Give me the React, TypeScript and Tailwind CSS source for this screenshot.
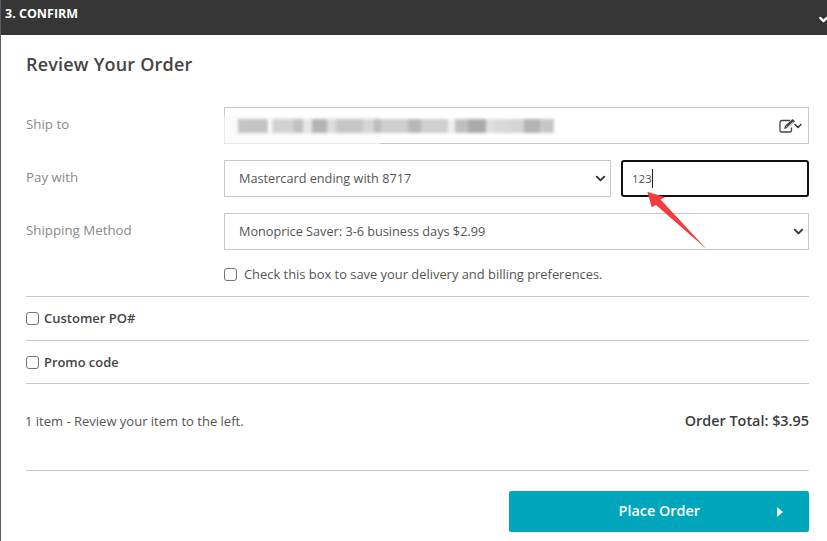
import { ChevronDown } from "lucide-react";

const blurBlocks = [
  "w-[30px] bg-[#c4c4c4]", "w-[4px] bg-white", "w-[22px] bg-[#d2d2d2]", "w-[9px] bg-[#c0c0c0]", "w-[9px] bg-[#e6e6e6]",
  "w-[15px] bg-[#b4b4b4]", "w-[9px] bg-[#dddddd]", "w-[27px] bg-[#c6c6c6]", "w-[11px] bg-[#d6d6d6]", "w-[7px] bg-[#bcbcbc]",
  "w-[27px] bg-[#cfcfcf]", "w-[13px] bg-[#b8b8b8]", "w-[27px] bg-[#d0d0d0]", "w-[7px] bg-[#f0f0f0]", "w-[13px] bg-[#c0c0c0]",
  "w-[18px] bg-[#ababab]", "w-[9px] bg-[#e0e0e0]", "w-[16px] bg-[#d8d8d8]", "w-[13px] bg-[#d4d4d4]", "w-[16px] bg-[#b4b4b4]", "w-[14px] bg-[#c8c8c8]",
];

function Row({ label, children }: { label: string; children: React.ReactNode }) {
  return (
    <div className="flex items-start">
      <div className="w-[198px] shrink-0 pt-[8px] text-[13.3px] leading-[18px] text-[#8a8a8a]">{label}</div>
      <div className="flex flex-1 gap-[10px]">{children}</div>
    </div>
  );
}

function SelectBox({ text, className }: { text: string; className: string }) {
  return (
    <div className={`flex items-center justify-between border border-[#c8c8c8] pl-[14px] pr-[2px] text-[12.7px] text-[#555] ${className}`}>
      <span>{text}</span>
      <ChevronDown size={15} strokeWidth={3} className="text-[#333]" />
    </div>
  );
}

function Check({ className = "" }: { className?: string }) {
  return <span className={`h-[13px] w-[13px] shrink-0 rounded-[3px] border border-[#767676] bg-white ${className}`} />;
}

export default function App() {
  return (
    <div className="h-[541px] w-[827px] overflow-hidden border-l border-l-[#5c5c5c] bg-white font-['Open_Sans',sans-serif]">
      <header className="flex h-[35px] items-start justify-between bg-[#363636] pl-[4px] pt-[5px] text-white">
        <h2 className="text-[12.5px] leading-[17px] font-bold">3. CONFIRM</h2>
        <ChevronDown size={13} strokeWidth={4} className="mt-[8px] -mr-[3px]" />
      </header>

      <main className="relative pl-[25px] pr-[18px]">
        <h1 className="pt-[17px] text-[18px] leading-[25px] font-semibold tracking-[0.2px] text-[#444]">Review Your Order</h1>

        <div className="mt-[30px] flex flex-col gap-[16px]">
          <Row label="Ship to">
            <div className="relative flex h-[37px] flex-1 items-center justify-between border border-[#c8c8c8] pl-[13px] pr-[4px]">
              {/* smudged patch from the screenshot's redaction */}
              <span className="absolute -bottom-px -left-px h-[28px] w-[156px] bg-[#fbfbfb] blur-[1px]" />
              <div className="relative flex h-[14px] blur-[1.5px]">
                {blurBlocks.map((c, i) => (
                  <span key={i} className={`h-full ${c}`} />
                ))}
              </div>
              <div className="flex items-center">
                <svg width="18" height="15" viewBox="0 0 18 15" fill="none" className="text-[#444]">
                  <path d="M11 2.5H2.5A1.5 1.5 0 0 0 1 4v8.5A1.5 1.5 0 0 0 2.5 14h8.5a1.5 1.5 0 0 0 1.5-1.5V9.5" stroke="currentColor" strokeWidth="1.3" />
                  <path d="M5 11l1-3.2L13.5 1 16 3.2 8.3 10z" fill="currentColor" />
                  <path d="M6.8 8l1.6 1.4L14 4" stroke="white" strokeWidth="0.7" />
                </svg>
                <ChevronDown size={12} strokeWidth={3} className="-ml-[5px] text-[#333]" />
              </div>
            </div>
          </Row>
          <Row label="Pay with">
            <SelectBox text="Mastercard ending with 8717" className="h-[37px] w-[387px]" />
            <div className="flex h-[37px] flex-1 items-center rounded-[3px] border-2 border-[#111] pl-[9px] text-[11.5px] text-[#555]">
              123
              <span className="h-[19px] w-px bg-[#222]" />
            </div>
          </Row>
          <Row label="Shipping Method">
            <SelectBox text="Monoprice Saver: 3-6 business days $2.99" className="h-[37px] flex-1" />
          </Row>
        </div>

        <label className="mt-[17px] ml-[198px] flex items-center gap-[7px] text-[12.9px] leading-[14px] text-[#555]">
          <Check />
          Check this box to save your delivery and billing preferences.
        </label>

        <div className="mt-[15px] border-t border-[#c8c8c8]">
          <label className="flex h-[43px] items-center gap-[5px] text-[13px] font-semibold text-[#444]">
            <Check />
            Customer PO#
          </label>
        </div>
        <div className="border-t border-[#c8c8c8]">
          <label className="flex h-[42px] items-center gap-[5px] pt-[1px] text-[12.9px] font-semibold text-[#444]">
            <Check />
            Promo code
          </label>
        </div>
        <div className="flex h-[88px] items-start justify-between border-t border-b border-[#c8c8c8] pt-[27px]">
          <p className="-ml-px pt-[1px] text-[13px] leading-[18px] text-[#555]">1 item - Review your item to the left.</p>
          <p className="text-[14.4px] leading-[20px] font-semibold text-[#3c3c3c]">Order Total: $3.95</p>
        </div>

        <div className="mt-[20px] flex justify-end">
          <button className="flex h-[41px] w-[300px] items-center justify-end rounded-[2px] bg-[#00a7bc] pr-[26px] text-[14.4px] font-semibold text-white">
            <span className="mr-[77px] pb-[2px]">Place Order</span>
            <svg width="6" height="10" viewBox="0 0 6 10" fill="currentColor">
              <path d="M0 0l6 5-6 5z" />
            </svg>
          </button>
        </div>

        <svg width="62" height="62" viewBox="0 0 62 62" className="absolute left-[645px] top-[154px]" fill="#f43c3c">
          <path d="M1.3 2.7L19 8.3L14.5 10.5L60.7 60.3L10 16L5.7 18.3z" />
        </svg>
      </main>
    </div>
  );
}
